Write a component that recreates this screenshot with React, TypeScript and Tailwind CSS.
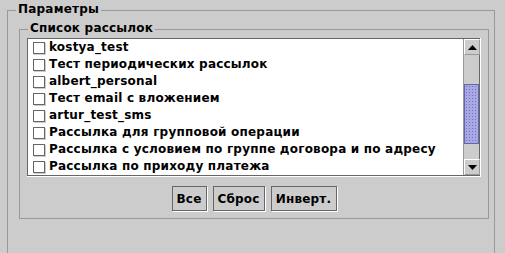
import React from 'react'

const items = [
  'kostya_test',
  'Тест периодических рассылок',
  'albert_personal',
  'Тест email с вложением',
  'artur_test_sms',
  'Рассылка для групповой операции',
  'Рассылка с условием по группе договора и по адресу',
  'Рассылка по приходу платежа',
]

const buttons = [
  { label: 'Все', w: 'w-[35px]' },
  { label: 'Сброс', w: 'w-[52px]' },
  { label: 'Инверт.', w: 'w-[66px]' },
]

function Arrow({ up }: { up?: boolean }) {
  return (
    <svg width="9" height="5" viewBox="0 0 9 5" className="block">
      {up ? <polygon points="4.5,0 9,5 0,5" fill="#000" /> : <polygon points="0,0 9,0 4.5,5" fill="#000" />}
    </svg>
  )
}

function ScrollButton({ up }: { up?: boolean }) {
  return (
    <div className="h-[16px] w-[16px] flex items-center justify-center bg-[#cccccc] border-t border-l border-white border-r border-b border-r-[#999] border-b-[#999]">
      <Arrow up={up} />
    </div>
  )
}

export default function App() {
  return (
    <div
      className="h-[253px] w-[505px] overflow-hidden bg-[#cccccc] text-black pt-[10px] tracking-[0.2px]"
      style={{ fontFamily: '"DejaVu Sans", sans-serif' }}
    >
      {/* Параметры */}
      <div className="relative ml-[7px] w-[488px] h-[280px] border border-[#999] pt-[18px] pl-[11px]">
        <span className="absolute left-[8px] top-[-10px] px-[2px] bg-[#cccccc] text-[12px] leading-[16px] font-bold">
          Параметры
        </span>

        {/* Список рассылок */}
        <div className="relative w-[470px] border border-[#999] px-[7px] pt-[8px] pb-[7px]">
          <span className="absolute left-[8px] top-[-10px] px-[2px] bg-[#cccccc] text-[12px] leading-[16px] font-bold">
            Список рассылок
          </span>

          <div className="border-r border-b border-white w-[454px]">
            <div className="flex h-[138px] border border-[#666]">
              <div className="flex-1 bg-white pl-[5px]">
                {items.map((it) => (
                  <div key={it} className="h-[17px] flex items-center gap-[4px]">
                    <div className="w-[12px] h-[12px] bg-white border border-[#666] shadow-[1px_1px_0_#ccc]" />
                    <span className="text-[12px] font-bold leading-[17px] whitespace-nowrap">{it}</span>
                  </div>
                ))}
              </div>
              <div className="w-[16px] flex flex-col bg-[#cccccc] border-l border-[#999]">
                <ScrollButton up />
                <div className="flex-1 flex flex-col pt-[29px]">
                  <div className="h-[60px] border border-[#6666aa] bg-[#a8a8e6] bg-[radial-gradient(#7474c0_0.8px,transparent_0.9px)] bg-[length:3px_3px]" />
                </div>
                <ScrollButton />
              </div>
            </div>
          </div>

          <div className="flex justify-center gap-[6px] mt-[9px]">
            {buttons.map((b) => (
              <button
                key={b.label}
                className={`${b.w} h-[25px] flex items-center justify-center border border-[#666] shadow-[1px_1px_0_#fff] bg-[#cccccc] text-[12px] font-bold leading-none`}
              >
                {b.label}
              </button>
            ))}
          </div>
        </div>
      </div>
    </div>
  )
}
